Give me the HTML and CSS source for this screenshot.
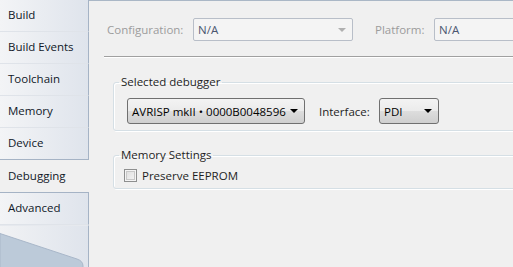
FILE: index.html
```html
<!DOCTYPE html>
<html>
<head>
<meta charset="utf-8">
<link rel="stylesheet" href="styles.css">
</head>
<body>
<div class="app">
  <nav class="tabs">
    <div class="tab">Build</div>
    <div class="tab">Build Events</div>
    <div class="tab">Toolchain</div>
    <div class="tab">Memory</div>
    <div class="tab before-sel">Device</div>
    <div class="tab selected">Debugging</div>
    <div class="tab after-sel">Advanced</div>
    <div class="filler">
      <svg class="deco" width="88" height="43" viewBox="0 0 88 43">
        <path d="M0 7.5 L77 33 Q83 35 83 40 L83 43 L0 43 Z" fill="#bccad9" stroke="#a9b7c9" stroke-width="1"/>
      </svg>
    </div>
  </nav>
  <main class="content">
    <div class="config-row">
      <span class="dis-label cfg-label">Configuration:</span>
      <div class="combo disabled cfg-combo"><span>N/A</span><span class="arrow gray"></span></div>
      <span class="dis-label plat-label">Platform:</span>
      <div class="combo disabled plat-combo"><span>N/A</span></div>
    </div>
    <div class="separator"></div>
    <fieldset class="group group-debugger">
      <legend>Selected debugger</legend>
      <div class="row">
        <div class="combo button dbg-combo"><span>AVRISP mkII • 0000B0048596</span><span class="arrow"></span></div>
        <span class="label iface-label">Interface:</span>
        <div class="combo button iface-combo"><span>PDI</span><span class="arrow"></span></div>
      </div>
    </fieldset>
    <fieldset class="group group-memory">
      <legend>Memory Settings</legend>
      <label class="check"><span class="box"></span><span>Preserve EEPROM</span></label>
    </fieldset>
  </main>
</div>
</body>
</html>
```
FILE: styles.css
```css
html, body {
  margin: 0;
  padding: 0;
}
body {
  width: 513px;
  height: 267px;
  overflow: hidden;
  background: #f0f0f0;
  font-family: "Open Sans", "Noto Sans", sans-serif;
  font-size: 11.5px;
  color: #1e1e1e;
}
.app {
  display: flex;
  height: 267px;
}
.tabs {
  width: 89px;
  flex: none;
  display: flex;
  flex-direction: column;
}
.tab {
  height: 31px;
  line-height: 30px;
  padding-left: 8px;
  border-right: 1px solid #a5b3c5;
  border-bottom: 1px solid #dfe3e9;
  background: linear-gradient(to right, #f3f4f6, #dfe4ec);
  color: #101828;
  white-space: nowrap;
}
.tab.before-sel {
  border-bottom-color: #a5b3c5;
}
.tab.selected {
  background: #f0f0f0;
  border-right-color: transparent;
  border-bottom: none;
  height: 32px;
  line-height: 31px;
}
.tab.after-sel {
  border-top: 1px solid #a5b3c5;
  height: 31px;
}
.filler {
  flex: 1;
  border-right: 1px solid #a5b3c5;
  background: linear-gradient(to right, #f1f2f4, #dfe4ec);
  border-top: 1px solid #e6e9ee;
  position: relative;
  overflow: hidden;
}
.deco {
  display: block;
  position: absolute;
  left: 0;
  top: 0;
}
.content {
  flex: 1;
  border-top: 1px solid #aab7c6;
  overflow: hidden;
}
.config-row {
  display: flex;
  align-items: center;
  margin-top: 17px;
  padding-left: 18px;
  height: 23px;
  white-space: nowrap;
}
.dis-label {
  color: #9c9c9c;
  flex: none;
}
.cfg-label {
  width: 86px;
}
.plat-label {
  width: 59px;
  margin-left: 22px;
}
.combo {
  box-sizing: border-box;
  display: flex;
  align-items: center;
  justify-content: space-between;
  padding-left: 4px;
  padding-right: 6px;
  border-radius: 2px;
  white-space: nowrap;
  flex: none;
}
.combo.disabled {
  height: 23px;
  border: 1px solid #b8bec8;
  background: #f4f4f4;
  color: #4b5670;
}
.cfg-combo {
  width: 160px;
}
.plat-combo {
  width: 120px;
}
.arrow {
  width: 0;
  height: 0;
  border-left: 4px solid transparent;
  border-right: 4px solid transparent;
  border-top: 4px solid #000;
}
.arrow.gray {
  border-top-color: #b0b0b0;
}
.separator {
  margin-top: 15px;
  margin-left: 15px;
  border-top: 1px solid #a0a0a0;
  border-bottom: 1px solid #ffffff;
}
.group {
  margin: 0 0 0 24px;
  width: 600px;
  border: 1px solid #d5dfe5;
  border-radius: 3px;
  box-shadow: inset 1px 1px 0 #fff, 1px 1px 0 #fff;
  padding: 0;
}
.group legend {
  padding: 0 2px;
  margin-left: 5px;
  color: #1e1e1e;
  line-height: 14px;
}
.group-debugger {
  margin-top: 17px;
  height: 56px;
  box-sizing: border-box;
}
.row {
  display: flex;
  align-items: center;
  padding-left: 13px;
  margin-top: 9px;
  white-space: nowrap;
}
.label {
  flex: none;
}
.combo.button {
  height: 26px;
  border: 1px solid #707070;
  border-radius: 3px;
  background: linear-gradient(to bottom, #f3f3f3 0%, #ebebeb 50%, #dddddd 51%, #cfcfcf 100%);
  color: #000;
}
.dbg-combo {
  width: 178px;
}
.iface-label {
  margin-left: 14px;
  width: 60px;
}
.iface-combo {
  width: 60px;
}
.group-memory {
  margin-top: 17px;
  height: 41px;
  box-sizing: border-box;
}
.check {
  display: flex;
  align-items: center;
  padding-left: 10px;
  margin-top: 6px;
  gap: 5px;
}
.box {
  box-sizing: border-box;
  width: 13px;
  height: 13px;
  border: 1px solid #8e8f8f;
  background: linear-gradient(135deg, #dcdcdc, #f6f6f6);
  box-shadow: inset 0 0 0 1px #f4f4f4, inset 0 0 0 2px #c8c8c8;
}
```
